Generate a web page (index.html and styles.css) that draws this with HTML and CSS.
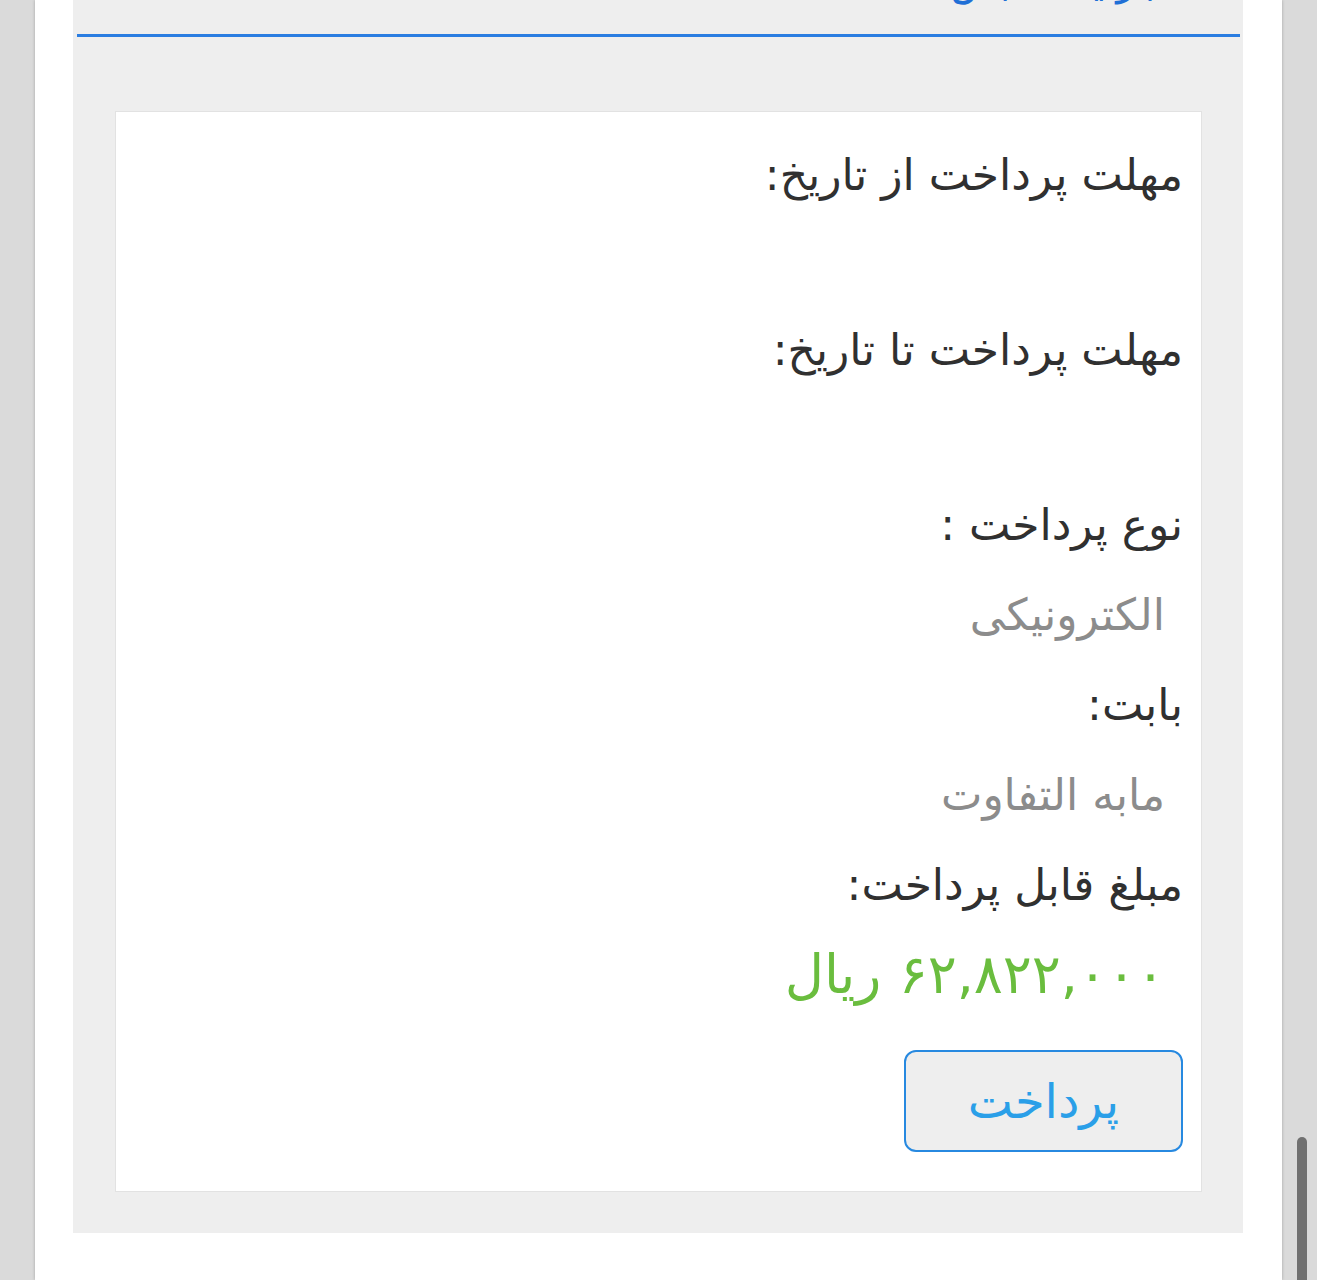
FILE: index.html
```html
<!DOCTYPE html>
<html lang="fa" dir="rtl">
<head>
<meta charset="utf-8">
<title>پرداخت</title>
<link rel="stylesheet" href="styles.css">
</head>
<body>
<div class="sheet">
  <section class="panel">
    <div class="tabs">
      <div class="tab-title">جزئیات قبض</div>
    </div>
    <div class="tab-line"></div>
    <div class="card">
      <div class="field-label">مهلت پرداخت از تاریخ:</div>
      <div class="field-value empty"></div>
      <div class="field-label">مهلت پرداخت تا تاریخ:</div>
      <div class="field-value empty"></div>
      <div class="field-label">نوع پرداخت :</div>
      <div class="field-value">الکترونیکی</div>
      <div class="field-label">بابت:</div>
      <div class="field-value">مابه التفاوت</div>
      <div class="field-label">مبلغ قابل پرداخت:</div>
      <div class="amount">۶۲,۸۲۲,۰۰۰ ریال</div>
      <div class="actions">
        <button class="pay-btn" type="button">پرداخت</button>
      </div>
    </div>
  </section>
</div>
<div class="scroll-thumb"></div>
</body>
</html>
```
FILE: styles.css
```css
html, body {
  margin: 0;
  padding: 0;
}
body {
  background: #dadada;
  font-family: "DejaVu Sans", "Noto Sans", sans-serif;
  min-height: 1280px;
  overflow: hidden;
}
.sheet {
  margin: 0 35px;
  background: #ffffff;
  min-height: 1280px;
  box-shadow: 0 0 3px rgba(0, 0, 0, 0.25);
  padding: 0 39px 0 38px;
  box-sizing: border-box;
}
.panel {
  background: #eeeeee;
  padding: 0 0 41px 0;
}
.tabs {
  height: 34px;
  overflow: hidden;
  padding: 0 80px 0 0;
}
.tab-title {
  margin-top: -42px;
  font-size: 40px;
  line-height: 46px;
  color: #1f6fd6;
}
.tab-line {
  height: 3px;
  background: #2a7de1;
  margin: 0 3px 0 4px;
}
.card {
  margin: 74px 41px 0 42px;
  background: #ffffff;
  border: 1px solid #e2e2e2;
  padding: 18px 18px 39px 18px;
}
.field-label {
  font-size: 44px;
  line-height: 90px;
  height: 90px;
  color: #303030;
  white-space: nowrap;
}
.field-value {
  font-size: 44px;
  line-height: 90px;
  height: 90px;
  color: #8c8c8c;
  padding-right: 18px;
  white-space: nowrap;
}
.field-value.empty {
  height: 85px;
}
.amount {
  font-size: 54px;
  line-height: 90px;
  height: 90px;
  color: #6abd3e;
  padding-right: 18px;
  white-space: nowrap;
}
.actions {
  margin-top: 30px;
  display: flex;
}
.pay-btn {
  width: 279px;
  height: 102px;
  box-sizing: border-box;
  border: 2px solid #2789e0;
  border-radius: 12px;
  background: #eeeeee;
  color: #2a9fe8;
  font-family: "DejaVu Sans", "Noto Sans", sans-serif;
  font-size: 48px;
  padding: 0;
  cursor: pointer;
}
.scroll-thumb {
  position: fixed;
  right: 10px;
  top: 1137px;
  width: 10px;
  height: 160px;
  background: #707070;
  border-radius: 5px;
}
```
